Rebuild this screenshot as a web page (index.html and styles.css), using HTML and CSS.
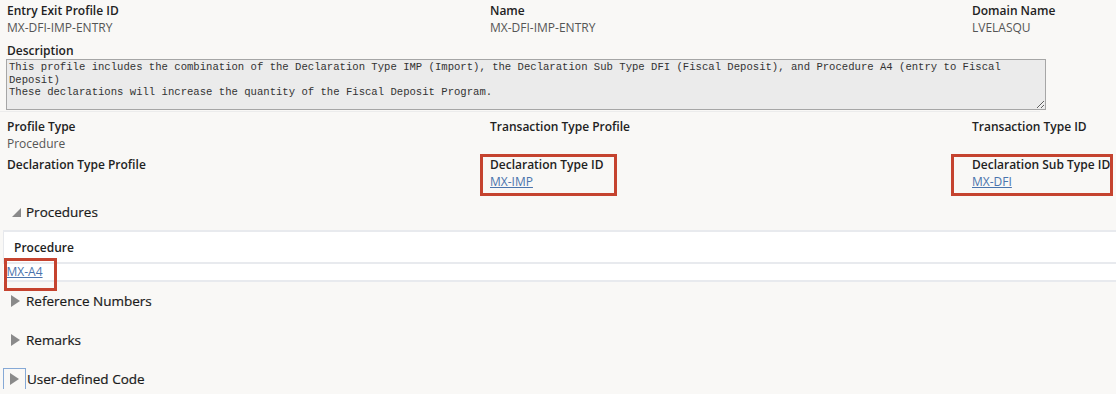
FILE: index.html
```html
<!DOCTYPE html>
<html lang="en">
<head>
    <meta charset="UTF-8">
    <meta name="viewport" content="width=device-width, initial-scale=1.0">
    <title>Entry Exit Profile</title>
    <link rel="stylesheet" href="styles.css">
</head>
<body>
    <div class="page">
        <div class="grid">
            <div class="field">
                <div class="label">Entry Exit Profile ID</div>
                <div class="value">MX-DFI-IMP-ENTRY</div>
            </div>
            <div class="field">
                <div class="label">Name</div>
                <div class="value">MX-DFI-IMP-ENTRY</div>
            </div>
            <div class="field">
                <div class="label">Domain Name</div>
                <div class="value">LVELASQU</div>
            </div>
        </div>

        <div class="field desc">
            <div class="label">Description</div>
            <textarea readonly>This profile includes the combination of the Declaration Type IMP (Import), the Declaration Sub Type DFI (Fiscal Deposit), and Procedure A4 (entry to Fiscal Deposit)
These declarations will increase the quantity of the Fiscal Deposit Program.</textarea>
        </div>
        <div class="divider"></div>

        <div class="grid">
            <div class="field">
                <div class="label">Profile Type</div>
                <div class="value">Procedure</div>
            </div>
            <div class="field">
                <div class="label">Transaction Type Profile</div>
            </div>
            <div class="field">
                <div class="label">Transaction Type ID</div>
            </div>
        </div>
        <div class="grid row-decl">
            <div class="field">
                <div class="label">Declaration Type Profile</div>
            </div>
            <div class="field hl">
                <div class="label">Declaration Type ID</div>
                <a class="value link" href="#">MX-IMP</a>
            </div>
            <div class="field hl">
                <div class="label">Declaration Sub Type ID</div>
                <a class="value link" href="#">MX-DFI</a>
            </div>
        </div>
    </div>

    <div class="section open">
        <svg class="tri" width="9" height="9" viewBox="0 0 9 9"><polygon points="9,0 9,9 0,9" fill="#8a8a8a"/></svg>
        <span>Procedures</span>
    </div>
    <table class="proc-table">
        <thead>
            <tr><th>Procedure</th></tr>
        </thead>
        <tbody>
            <tr><td><a class="link hl-cell" href="#">MX-A4</a></td></tr>
        </tbody>
    </table>

    <div class="section">
        <svg class="tri" width="9" height="12" viewBox="0 0 9 12"><polygon points="0,0 9,6 0,12" fill="#8a8a8a"/></svg>
        <span>Reference Numbers</span>
    </div>
    <div class="section">
        <svg class="tri" width="9" height="12" viewBox="0 0 9 12"><polygon points="0,0 9,6 0,12" fill="#8a8a8a"/></svg>
        <span>Remarks</span>
    </div>
    <div class="section focus">
        <span class="focus-box"><svg class="tri" width="9" height="12" viewBox="0 0 9 12"><polygon points="0,0 9,6 0,12" fill="#8a8a8a"/></svg></span>
        <span>User-defined Code</span>
    </div>
</body>
</html>
```

FILE: styles.css
```css
body {
    margin: 0;
    background: #f9f8f6;
    font-family: "Open Sans", Arial, sans-serif;
    font-size: 12px;
    color: #333;
    overflow: hidden;
}
.page {
    padding: 3px 0 0 7px;
}
.grid {
    display: grid;
    grid-template-columns: 483px 482px 1fr;
}
.field {
    position: relative;
}
.label {
    font-weight: 600;
    color: #222;
    line-height: 16px;
    white-space: nowrap;
}
.value {
    display: block;
    color: #555;
    line-height: 16px;
    padding-top: 1px;
}
.link {
    color: #4a74ad;
    text-decoration: underline;
}
.desc {
    margin-top: 6px;
}
.desc .label {
    line-height: 17px;
}
.desc textarea {
    display: block;
    margin: 0 0 0 -1px;
    width: 1040px;
    height: 51px;
    box-sizing: border-box;
    padding: 1px 2px;
    border: 1px solid #a6a6a6;
    background: #ebebeb;
    font-family: "Liberation Mono", monospace;
    font-size: 10.6px;
    line-height: 12.5px;
    color: #333;
}
.divider {
    width: 1040px;
    margin: 1px 0 0 -7px;
    border-top: 1px solid #ececec;
}
.divider + .grid {
    margin-top: 7px;
}
.row-decl {
    margin-top: 5px;
}
.hl::after {
    content: "";
    position: absolute;
    left: -10px;
    top: -3px;
    width: 131px;
    height: 36px;
    border: 3px solid #c5432f;
}
.hl:last-child::after {
    left: -21px;
    width: 156px;
}
.section {
    display: flex;
    align-items: center;
    gap: 6px;
    padding-left: 11px;
    height: 20px;
    font-size: 13.5px;
    color: #1a1a1a;
    -webkit-text-stroke: 0.2px #1a1a1a;
}
.section.open {
    margin-top: 12px;
    padding-left: 12px;
    gap: 5px;
}
.proc-table {
    margin: 8px 0 0 3px;
    width: calc(100% - 3px);
    border-collapse: collapse;
    background: #fff;
}
.proc-table th {
    text-align: left;
    font-weight: 600;
    color: #222;
    padding: 0 0 0 10px;
    height: 30px;
    border-left: 1px solid #e6e8ec;
    border-top: 2px solid #e8eaee;
    border-bottom: 2px solid #e8eaee;
}
.proc-table td {
    padding: 0 0 0 3px;
    height: 16px;
    border-bottom: 2px solid #e8eaee;
    line-height: 16px;
}
.hl-cell {
    position: relative;
    display: inline-block;
    line-height: 16px;
}
.hl-cell::after {
    content: "";
    position: absolute;
    left: -3px;
    top: -6px;
    width: 47px;
    height: 27px;
    border: 3px solid #c5432f;
}
.proc-table + .section {
    margin-top: 9px;
}
.section + .section {
    margin-top: 19px;
}
.section.focus {
    padding-left: 3px;
    gap: 1px;
}
.focus-box {
    display: flex;
    align-items: center;
    justify-content: center;
    width: 21px;
    height: 21px;
    border: 1px solid #86a9d6;
}
```
